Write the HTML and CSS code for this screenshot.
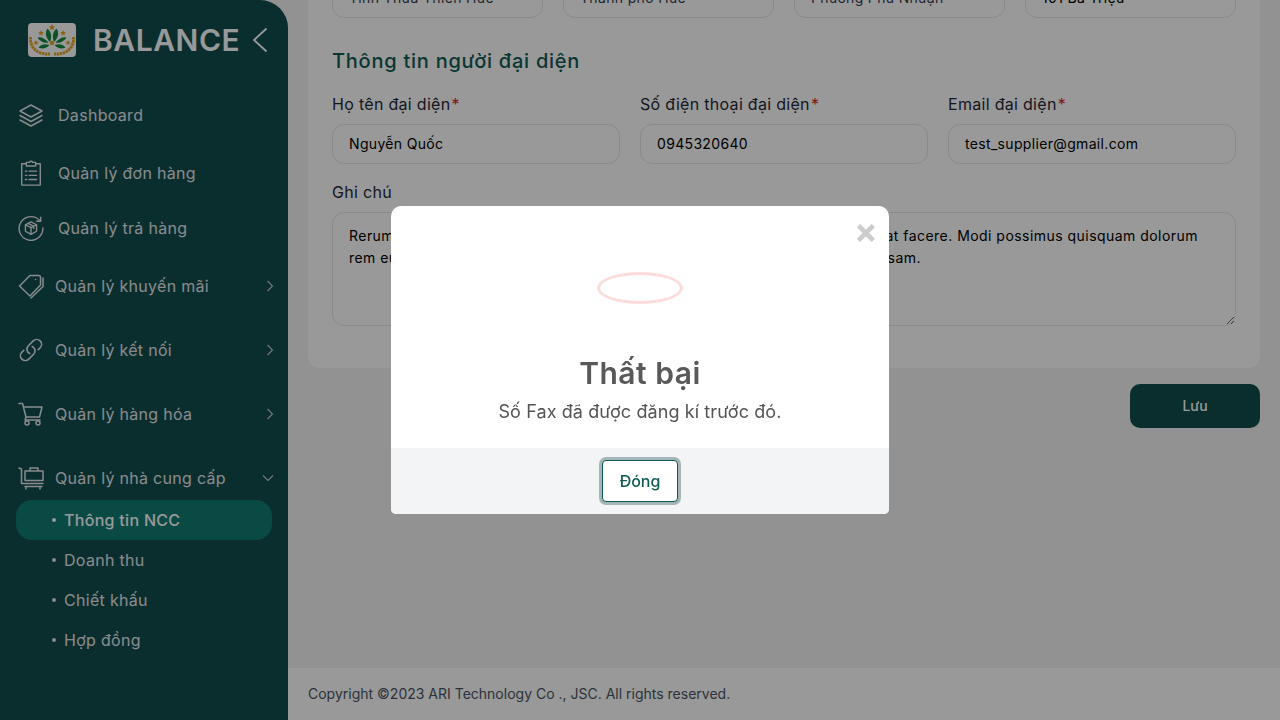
FILE: index.html
```html
<!DOCTYPE html>
<html lang="vi">
<head>
<meta charset="utf-8">
<title>Balance</title>
<link rel="stylesheet" href="styles.css">
</head>
<body>
<div class="app">
  <aside class="sidebar">
    <div class="brand">
      <svg class="logo" viewBox="0 0 48 34" aria-hidden="true">
        <rect width="48" height="34" rx="4" fill="#fff"/>
        <g fill="#e0a526">
          <path d="M24 1l1 2.200 2.300.2-1.800 1.500.6 2.300-2.100-1.200-2.100 1.200.6-2.300-1.800-1.500 2.300-.2z"/>
          <path d="M13 7l.9 1.900 2 .2-1.500 1.300.5 2-1.900-1-1.800 1 .5-2-1.500-1.300 2-.2z"/>
          <path d="M35 7l.9 1.900 2 .2-1.500 1.300.5 2-1.900-1-1.800 1 .5-2-1.500-1.300 2-.2z"/>
          <path d="M8 17l.8 1.700 1.900.2-1.400 1.200.4 1.900-1.700-1-1.700 1 .4-1.900-1.400-1.200 1.900-.2z"/>
          <path d="M40 17l.8 1.700 1.900.2-1.400 1.200.4 1.900-1.700-1-1.700 1 .4-1.900-1.400-1.200 1.900-.2z"/>
        </g>
        <g fill="#138a40">
          <path d="M22 19C17 14 17 9 19.500 5.500 23.500 9 24 14 22 19z"/>
          <path d="M26 19C31 14 31 9 28.500 5.500 24.500 9 24 14 26 19z"/>
          <path d="M20.500 19.500C17 15.500 13 13.500 9.500 14.500 12 18.500 16 20.500 20.500 19.500z"/>
          <path d="M27.500 19.500C31 15.500 35 13.500 38.500 14.500 36 18.500 32 20.500 27.500 19.500z"/>
          <path d="M21.500 22C17 20.500 13.500 21 10.500 24.500 14.500 26.500 18.500 25.500 21.500 22z"/>
          <path d="M26.500 22C31 20.500 34.500 21 37.500 24.500 33.500 26.500 29.500 25.500 26.500 22z"/>
        </g>
        <circle cx="24" cy="20" r="2.200" fill="#e0a526"/>
        <path class="laurel" d="M2.500 14C1.500 24 9 32 22 31M45.500 14C46.500 24 39 32 26 31"/>
      </svg>
      <span class="brand-name">BALANCE</span>
      <svg class="collapse" viewBox="0 0 16 26" aria-hidden="true"><path d="M14.500 1.500L2 13l12.500 11.500"/></svg>
    </div>
    <nav class="menu">
      <a class="link link-dash">
        <svg class="ico" viewBox="0 0 26 24"><path d="M13 2L2 8l11 6 11-6zM2 12.500l11 6 11-6M2 17l11 6 11-6"/></svg>
        <span>Dashboard</span>
      </a>
      <a class="link link-order">
        <svg class="ico" viewBox="0 0 26 28"><path d="M8 4H3v23h20V4h-5M8 2.500h3.200a2 2 0 0 1 3.600 0H18v4H8zM7 12h1.500M11 12h8M7 16.500h1.500M11 16.500h8M7 21h1.500M11 21h8"/></svg>
        <span>Quản lý đơn hàng</span>
      </a>
      <a class="link link-return">
        <svg class="ico" viewBox="0 0 28 28"><path d="M24 6.500A12.800 12.800 0 1 0 26.800 14M20 6.800h4.500V2.300M14 7.500l6 3v7l-6 3.300-6-3.300v-7zM8 10.500l6 3.200 6-3.200M14 13.700v7M11 9l6 3.200v2.300"/></svg>
        <span>Quản lý trả hàng</span>
      </a>
      <a class="link link-group">
        <svg class="ico ico-g" viewBox="0 0 26 26"><path d="M1.500 13L12 2.500h8.500a2 2 0 0 1 2 2V12L12 23zM17.500 6.500h.1M25 5v8.500L13 25"/></svg>
        <span class="label">Quản lý khuyến mãi</span>
        <svg class="chev" viewBox="0 0 8 12"><path d="M1.500 1l5 5-5 5"/></svg>
      </a>
      <a class="link link-group">
        <svg class="ico ico-g" viewBox="0 0 24 24"><path d="M13.190 8.688a4.500 4.500 0 0 1 1.242 7.244l-4.500 4.500a4.500 4.500 0 0 1-6.364-6.364l1.757-1.757m13.350-.622 1.757-1.757a4.500 4.500 0 0 0-6.364-6.364l-4.500 4.500a4.500 4.500 0 0 0 1.242 7.244"/></svg>
        <span class="label">Quản lý kết nối</span>
        <svg class="chev" viewBox="0 0 8 12"><path d="M1.500 1l5 5-5 5"/></svg>
      </a>
      <a class="link link-group">
        <svg class="ico ico-g" viewBox="0 0 26 24"><path d="M1 1.500h3.500L8 15h13.500L24 5H5.500M8 15l-1 3h15"/><circle cx="9" cy="21" r="2"/><circle cx="20" cy="21" r="2"/></svg>
        <span class="label">Quản lý hàng hóa</span>
        <svg class="chev" viewBox="0 0 8 12"><path d="M1.500 1l5 5-5 5"/></svg>
      </a>
      <a class="link link-open">
        <svg class="ico ico-g" viewBox="0 0 26 24"><path d="M1 2l2.500 1v14.500h21.500M7 5h18v9.500H7zM12 5V2h8v3M7 20.500h17M8 20.500v2.500M22 20.500v2.500"/></svg>
        <span class="label">Quản lý nhà cung cấp</span>
        <svg class="chev-down" viewBox="0 0 12 8"><path d="M1 1.500l5 5 5-5"/></svg>
      </a>
      <a class="sub sub-active">Thông tin NCC</a>
      <a class="sub">Doanh thu</a>
      <a class="sub">Chiết khấu</a>
      <a class="sub">Hợp đồng</a>
    </nav>
  </aside>

  <main class="main">
    <div class="content">
      <section class="card">
        <div class="grid grid-4">
          <div class="input select">Tỉnh Thừa Thiên Huế<i class="caret"></i></div>
          <div class="input select">Thành phố Huế<i class="caret"></i></div>
          <div class="input select">Phường Phú Nhuận<i class="caret"></i></div>
          <div class="input">101 Bà Triệu</div>
        </div>
        <h2 class="section-title">Thông tin người đại diện</h2>
        <div class="grid grid-3">
          <div class="field">
            <label class="field-label">Họ tên đại diện<b class="req">*</b></label>
            <div class="input">Nguyễn Quốc</div>
          </div>
          <div class="field">
            <label class="field-label">Số điện thoại đại diện<b class="req">*</b></label>
            <div class="input">0945320640</div>
          </div>
          <div class="field">
            <label class="field-label">Email đại diện<b class="req">*</b></label>
            <div class="input">test_supplier@gmail.com</div>
          </div>
        </div>
        <div class="field field-note">
          <label class="field-label">Ghi chú</label>
          <div class="textarea"><div class="note-line"><span>Rerum</span><span>giat facere. Modi possimus quisquam dolorum</span></div><div class="note-line note-line-2"><span>rem eu</span><span>sam.</span></div></div>
        </div>
      </section>
      <div class="actions"><button class="save" type="button">Lưu</button></div>
    </div>
    <footer class="footer">Copyright ©2023 ARI Technology Co ., JSC. All rights reserved.</footer>
  </main>
</div>

<div class="overlay">
  <div class="modal">
    <span class="close">×</span>
    <div class="modal-body">
      <div class="error-ring"></div>
      <h1 class="modal-title">Thất bại</h1>
      <p class="modal-text">Số Fax đã được đăng kí trước đó.</p>
    </div>
    <div class="modal-foot"><button class="btn-close" type="button">Đóng</button></div>
  </div>
</div>
</body>
</html>
```

FILE: styles.css
```css
* { box-sizing: border-box; }
html, body { margin: 0; height: 100%; overflow: hidden; }
body { font-family: Inter, "Noto Sans", sans-serif; font-size: 16px; background: #f3f4f6; color: #374151; }

.app { display: flex; height: 720px; }

/* sidebar */
.sidebar { width: 288px; flex: none; background: #104d4b; border-top-right-radius: 28px; color: #e5e7eb; }
.brand { height: 86px; display: flex; align-items: center; padding: 0 20px 6px 28px; }
.logo { width: 48px; height: 34px; flex: none; }
.laurel { fill: none; stroke: #e0a526; stroke-width: 3; stroke-dasharray: 2.500 .6; }
.brand-name { margin-left: 17px; font-size: 30px; line-height: 36px; font-weight: 600; color: #fff; letter-spacing: .55px; }
.collapse { width: 16px; height: 26px; margin-left: auto; fill: none; stroke: #fff; stroke-width: 1.800; }

.menu { display: flex; flex-direction: column; }
.link { display: flex; align-items: center; padding-left: 18px; font-size: 16px; letter-spacing: .3px; font-weight: 400; }
.link-dash { height: 58px; }
.link-order { height: 58px; }
.link-return { height: 52px; }
.link-group { height: 64px; padding-right: 14px; }
.link-open { height: 44px; margin-top: 10px; padding-right: 14px; }
.ico { width: 26px; height: 26px; flex: none; margin-right: 14px; fill: none; stroke: currentColor; stroke-width: 1.500; stroke-linecap: round; stroke-linejoin: round; }
.ico-g { margin-right: 11px; }
.label { flex: 1; }
.chev { width: 8px; height: 12px; fill: none; stroke: #c4c8cc; stroke-width: 1.100; }
.chev-down { width: 12px; height: 8px; fill: none; stroke: #c4c8cc; stroke-width: 1.100; }

.sub { display: flex; align-items: center; height: 40px; margin: 0 16px; padding-left: 48px; border-radius: 16px; letter-spacing: .3px; font-weight: 400; position: relative; }
.sub::before { content: ""; position: absolute; left: 36px; top: 18px; width: 4px; height: 4px; border-radius: 50%; background: currentColor; }
.sub-active { background: #107c72; color: #fff; font-weight: 500; }

/* main */
.main { flex: 1; min-width: 0; display: flex; flex-direction: column; }
.content { flex: 1; min-height: 0; overflow: hidden; padding: 0 20px; }
.card { background: #fff; border-radius: 0 0 12px 12px; margin-top: -22px; padding: 0 24px 42px; height: 390px; }
.grid { display: grid; column-gap: 20px; }
.grid-4 { grid-template-columns: repeat(4, 1fr); }
.grid-3 { grid-template-columns: repeat(3, 1fr); }
.input { height: 40px; border: 1px solid #e5e7eb; border-radius: 12px; padding: 0 16px; display: flex; align-items: center; font-size: 14px; line-height: 20px; color: #000; letter-spacing: .33px; position: relative; white-space: nowrap; }
.select { color: #374151; }
.caret { position: absolute; right: 14px; top: 12px; width: 6px; height: 6px; border-right: 1px solid #c4c8cc; border-bottom: 1px solid #c4c8cc; transform: rotate(45deg); }
.section-title { margin: 28px 0 16px; font-size: 20px; line-height: 30px; font-weight: 500; color: #0f5a55; letter-spacing: .75px; }
.field { display: flex; flex-direction: column; }
.field-label { font-size: 16px; line-height: 24px; height: 32px; color: #1f2937; letter-spacing: .3px; }
.req { color: #dc2626; font-weight: 400; margin-left: 1px; }
.field-note { margin-top: 16px; }
.textarea { height: 114px; border: 1px solid #e5e7eb; border-radius: 12px; padding: 12px 37px 12px 16px; font-size: 14px; line-height: 22px; color: #000; letter-spacing: .46px; resize: both; overflow: auto; }
.note-line { display: flex; justify-content: space-between; white-space: nowrap; }
.note-line-2 { padding-right: 277px; }
.actions { display: flex; justify-content: flex-end; margin-top: 16px; }
.save { width: 130px; height: 44px; border: 0; border-radius: 10px; padding-bottom: 3px; background: #104d4b; color: #fff; font: 500 14px Inter, sans-serif; }

.footer { height: 52px; flex: none; background: #fff; display: flex; align-items: center; padding: 0 0 2px 20px; font-size: 14px; font-weight: 400; color: #4b5563; }

/* dialog */
.overlay { position: fixed; inset: 0; background: rgba(0, 0, 0, .4); display: flex; align-items: center; justify-content: center; }
.modal { position: relative; width: 498px; height: 308px; border-radius: 10px 10px 5px 5px; background: #fff; overflow: hidden; display: flex; flex-direction: column; }
.close { position: absolute; top: 6px; right: 8px; font-size: 35px; line-height: 36px; width: 30px; text-align: center; color: #ccc; font-weight: 700; }
.modal-body { flex: 1; display: flex; flex-direction: column; align-items: center; padding-top: 66px; }
.error-ring { width: 86px; height: 32px; border-radius: 50%; border: 3px solid #fbdcd8; }
.modal-title { margin: 47px 0 0; font-size: 30px; line-height: 44px; font-weight: 600; color: #595959; letter-spacing: .5px; }
.modal-text { margin: 4px 0 0; font-size: 18px; line-height: 26px; color: #545454; letter-spacing: .1px; }
.modal-foot { height: 66px; flex: none; background: #f3f4f6; display: flex; align-items: center; justify-content: center; }
.btn-close { width: 76px; height: 42px; border: 1.500px solid #0f5a55; border-radius: 4px; background: #fff; color: #0f5a55; font: 500 16px Inter, sans-serif; box-shadow: 0 0 0 3px #a5b6b8; }
```
